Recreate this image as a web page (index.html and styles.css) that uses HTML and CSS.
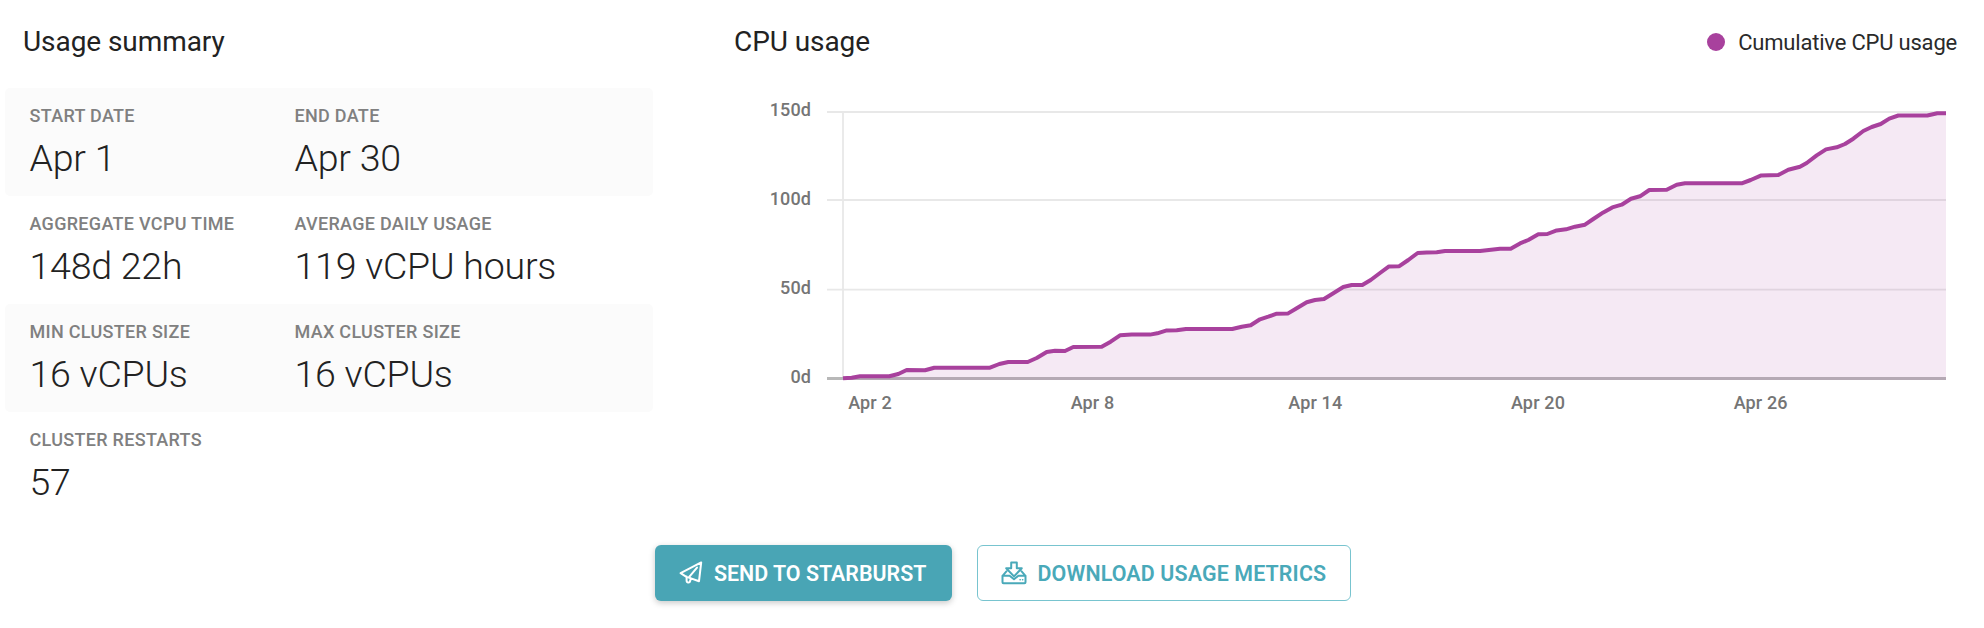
FILE: index.html
```html
<!DOCTYPE html>
<html lang="en">
<head>
<meta charset="utf-8">
<title>Usage</title>
<link rel="stylesheet" href="styles.css">
</head>
<body>
<main class="page">
  <div class="panels">
    <section class="summary">
      <h2 class="title">Usage summary</h2>
      <dl class="rows">
        <div class="row shaded">
          <div class="cell"><dt>Start date</dt><dd>Apr 1</dd></div>
          <div class="cell"><dt>End date</dt><dd>Apr 30</dd></div>
        </div>
        <div class="row">
          <div class="cell"><dt>Aggregate vCPU time</dt><dd>148d 22h</dd></div>
          <div class="cell"><dt>Average daily usage</dt><dd>119 vCPU hours</dd></div>
        </div>
        <div class="row shaded">
          <div class="cell"><dt>Min cluster size</dt><dd>16 vCPUs</dd></div>
          <div class="cell"><dt>Max cluster size</dt><dd>16 vCPUs</dd></div>
        </div>
        <div class="row">
          <div class="cell"><dt>Cluster restarts</dt><dd>57</dd></div>
        </div>
      </dl>
    </section>
    <section class="usage">
      <header class="usage-head">
        <h2 class="title">CPU usage</h2>
        <div class="legend"><span class="dot"></span><span>Cumulative CPU usage</span></div>
      </header>
      <svg class="chart" viewBox="734 88 1226 336" width="1226" height="336">
        <g class="grid">
          <path d="M827 112H1946M827 200H1946M827 289.7H1946M843 112V378"/>
        </g>
        <path class="baseline" d="M827 378.4H1946"/>
        <path class="area" d="M843 378.3L851.7 377.7L860 376.3L889.3 376.3L898.3 374L906.7 370L925 370.3L934.3 367.7L990 367.7L999.3 364L1008.3 362L1027.7 362L1036.7 358L1046.7 352L1055 350.7L1065 351L1073.3 347L1101.7 346.7L1110.7 341.7L1120 335.3L1131.7 334.4L1150 334.6L1157.3 333.3L1166.7 330.4L1176.7 330.3L1186 329L1232.3 329L1241.7 326.7L1250.7 325.3L1260 319.3L1268.3 316.7L1276.7 313.7L1287.7 313.6L1296.7 308.3L1306.7 302.3L1315 300L1324 299L1333.3 293.3L1343.3 287L1351.7 285L1362.3 285L1370.7 280L1380 273L1389 266.4L1399.3 266.2L1408.3 260L1417.7 253L1426.7 252.4L1436.7 252.3L1445 251L1480 251L1500 248.8L1510.7 248.7L1520 243.4L1528.3 240L1538.3 234.3L1547.3 234L1556.7 230.4L1566 229.3L1575 226.7L1585 224.7L1593.3 219L1603.3 212.4L1612.3 207.4L1621.7 204.7L1631 198.7L1640 196.3L1649.3 190L1666.7 189.7L1676.7 184.8L1685 183.3L1741.7 183.3L1750.7 180L1760.7 175.6L1778.3 175L1788.3 169.7L1800 166.7L1806.7 163L1816.7 155.4L1826 149.4L1836.7 147.3L1845 144L1853.3 138.7L1863.3 131L1871.7 127L1880.7 124L1889.3 118.6L1898.3 115.5L1927.3 115.5L1937.3 113.2L1946 113.2V380H843Z"/>
        <path class="line" d="M843 378.3L851.7 377.7L860 376.3L889.3 376.3L898.3 374L906.7 370L925 370.3L934.3 367.7L990 367.7L999.3 364L1008.3 362L1027.7 362L1036.7 358L1046.7 352L1055 350.7L1065 351L1073.3 347L1101.7 346.7L1110.7 341.7L1120 335.3L1131.7 334.4L1150 334.6L1157.3 333.3L1166.7 330.4L1176.7 330.3L1186 329L1232.3 329L1241.7 326.7L1250.7 325.3L1260 319.3L1268.3 316.7L1276.7 313.7L1287.7 313.6L1296.7 308.3L1306.7 302.3L1315 300L1324 299L1333.3 293.3L1343.3 287L1351.7 285L1362.3 285L1370.7 280L1380 273L1389 266.4L1399.3 266.2L1408.3 260L1417.7 253L1426.7 252.4L1436.7 252.3L1445 251L1480 251L1500 248.8L1510.7 248.7L1520 243.4L1528.3 240L1538.3 234.3L1547.3 234L1556.7 230.4L1566 229.3L1575 226.7L1585 224.7L1593.3 219L1603.3 212.4L1612.3 207.4L1621.7 204.7L1631 198.7L1640 196.3L1649.3 190L1666.7 189.7L1676.7 184.8L1685 183.3L1741.7 183.3L1750.7 180L1760.7 175.6L1778.3 175L1788.3 169.7L1800 166.7L1806.7 163L1816.7 155.4L1826 149.4L1836.7 147.3L1845 144L1853.3 138.7L1863.3 131L1871.7 127L1880.7 124L1889.3 118.6L1898.3 115.5L1927.3 115.5L1937.3 113.2L1946 113.2"/>
        <g class="axis axis-y">
          <text x="811" y="115.5">150d</text>
          <text x="811" y="205">100d</text>
          <text x="811" y="293.5">50d</text>
          <text x="811" y="382.5">0d</text>
        </g>
        <g class="axis axis-x">
          <text x="870" y="409.2">Apr 2</text>
          <text x="1092.5" y="409.2">Apr 8</text>
          <text x="1315.3" y="409.2">Apr 14</text>
          <text x="1538" y="409.2">Apr 20</text>
          <text x="1760.7" y="409.2">Apr 26</text>
        </g>
      </svg>
    </section>
  </div>
  <div class="actions">
    <button class="btn primary">
      <svg class="icon-send" viewBox="0 0 24 24" width="24" height="24">
        <path d="M22.2 1.4L1.6 12.2L7 15.6L20 20.2ZM7.6 15.6V20A1.8 1.8 0 0 0 10.8 20.8L12 17.4M18 6.6L9.8 16.4"/>
      </svg>
      <span>Send to Starburst</span>
    </button>
    <button class="btn outline">
      <svg class="icon-download" viewBox="0 0 26 24" width="26" height="24">
        <path d="M10.2 1.4H15.8V7.2H20.8L13 15.4L5.2 7.2H10.2ZM5.4 10.4L1.5 14.8V21.2Q1.5 22.2 2.5 22.2H23.5Q24.5 22.2 24.5 21.2V14.8L20.6 10.4M1.5 14.8H8.6L13 18.2L17.4 14.8H24.5"/>
        <path class="lights" d="M19 18.8H19.3M21.5 18.8H21.8"/>
      </svg>
      <span>Download usage metrics</span>
    </button>
  </div>
</main>
</body>
</html>
```

FILE: styles.css
```css
* { box-sizing: border-box; }
body {
  margin: 0;
  background: #fff;
  color: #2a2a2a;
  font-family: Roboto, "Liberation Sans", sans-serif;
}
.page { width: 1984px; height: 628px; overflow: hidden; }
.panels {
  display: flex;
  gap: 81px;
  height: 545px;
  padding-left: 5px;
}
.summary { width: 648px; }
.title {
  margin: 0;
  height: 88px;
  padding-top: 25px;
  font-size: 28px;
  line-height: 33px;
  font-weight: 400;
  letter-spacing: -0.07px;
  color: #222;
}
.summary .title { padding-left: 18px; }
.rows { margin: 0; }
.row {
  display: grid;
  grid-template-columns: 265px 1fr;
  height: 108px;
  padding: 16px 24.5px 0;
  border-radius: 5px;
}
.shaded { background: #fbfbfb; }
dt {
  font-size: 18px;
  line-height: 24px;
  font-weight: 500;
  letter-spacing: 0.3px;
  text-transform: uppercase;
  color: #808080;
  white-space: nowrap;
}
dd {
  margin: 8px 0 0;
  font-size: 37.5px;
  line-height: 44px;
  font-weight: 300;
  letter-spacing: -0.22px;
  color: #222;
  white-space: nowrap;
}
.usage { width: 1226px; }
.usage-head { display: flex; justify-content: space-between; height: 88px; }
.legend {
  display: flex;
  align-items: center;
  gap: 13px;
  height: 84px;
  padding-right: 3px;
  font-size: 22px;
  letter-spacing: -0.2px;
  color: #2a2a2a;
}
.dot { width: 18px; height: 18px; border-radius: 50%; background: #a8419d; }
.chart { display: block; }
.grid { fill: none; stroke: #e8e8e8; stroke-width: 1.8; }
.baseline { stroke: #b8b8b8; stroke-width: 3; }
.area { fill: #a8339a; fill-opacity: 0.11; }
.line { fill: none; stroke: #a8419d; stroke-width: 4; stroke-linejoin: round; }
.axis { font-size: 18px; font-weight: 500; fill: #757575; }
.axis-y { text-anchor: end; letter-spacing: 0.1px; }
.axis-x { text-anchor: middle; letter-spacing: 0.15px; }
.actions {
  display: flex;
  gap: 24.5px;
  padding-left: 655px;
}
.btn {
  display: flex;
  align-items: center;
  height: 56px;
  padding: 0 24px;
  border: 0;
  border-radius: 6px;
  font-family: inherit;
  font-size: 21.4px;
  font-weight: 600;
  text-transform: uppercase;
  white-space: nowrap;
}
.btn svg { flex: none; fill: none; stroke: currentColor; stroke-width: 2; stroke-linejoin: round; stroke-linecap: round; }
.btn .lights { stroke-width: 1.4; }
.primary {
  width: 297px;
  gap: 11px;
  background: #49a5b5;
  color: #fff;
  box-shadow: 0 2px 6px rgba(0, 0, 0, 0.22);
}
.outline {
  width: 374px;
  gap: 11px;
  padding-left: 23px;
  background: #fff;
  color: #49a9b9;
  letter-spacing: 0.14px;
  border: 1px solid #78c4cf;
}
```
